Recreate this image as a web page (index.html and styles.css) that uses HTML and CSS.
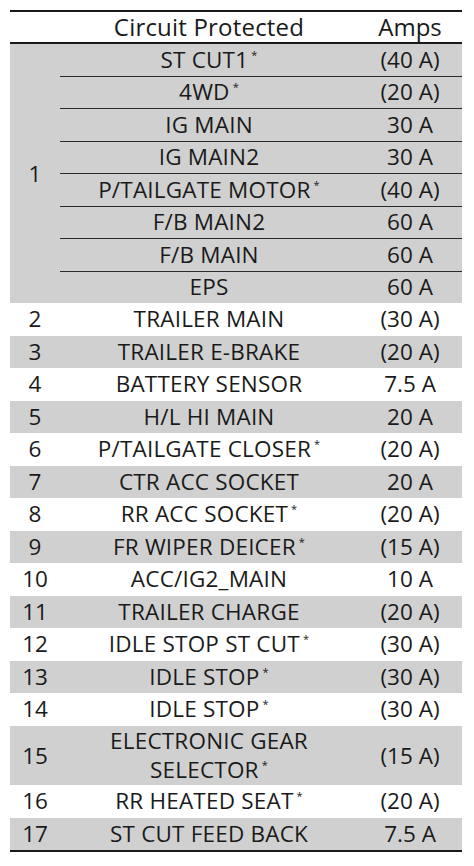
FILE: index.html
```html
<!DOCTYPE html>
<html>
<head>
<meta charset="utf-8">
<link rel="stylesheet" href="styles.css">
</head>
<body>
<table class="fuse">
  <thead>
    <tr><th class="no"></th><th class="circ">Circuit Protected</th><th class="amps">Amps</th></tr>
  </thead>
  <tbody>
    <tr class="g first"><td class="no" rowspan="8">1</td><td class="circ">ST CUT1<sup>*</sup></td><td class="amps">(40 A)</td></tr>
    <tr class="g sub"><td class="circ">4WD<sup>*</sup></td><td class="amps">(20 A)</td></tr>
    <tr class="g sub"><td class="circ">IG MAIN</td><td class="amps">30 A</td></tr>
    <tr class="g sub"><td class="circ">IG MAIN2</td><td class="amps">30 A</td></tr>
    <tr class="g sub"><td class="circ">P/TAILGATE MOTOR<sup>*</sup></td><td class="amps">(40 A)</td></tr>
    <tr class="g sub"><td class="circ">F/B MAIN2</td><td class="amps">60 A</td></tr>
    <tr class="g sub"><td class="circ">F/B MAIN</td><td class="amps">60 A</td></tr>
    <tr class="g sub"><td class="circ">EPS</td><td class="amps">60 A</td></tr>
    <tr><td class="no">2</td><td class="circ">TRAILER MAIN</td><td class="amps">(30 A)</td></tr>
    <tr class="g"><td class="no">3</td><td class="circ">TRAILER E-BRAKE</td><td class="amps">(20 A)</td></tr>
    <tr><td class="no">4</td><td class="circ">BATTERY SENSOR</td><td class="amps">7.5 A</td></tr>
    <tr class="g"><td class="no">5</td><td class="circ">H/L HI MAIN</td><td class="amps">20 A</td></tr>
    <tr><td class="no">6</td><td class="circ">P/TAILGATE CLOSER<sup>*</sup></td><td class="amps">(20 A)</td></tr>
    <tr class="g"><td class="no">7</td><td class="circ">CTR ACC SOCKET</td><td class="amps">20 A</td></tr>
    <tr><td class="no">8</td><td class="circ">RR ACC SOCKET<sup>*</sup></td><td class="amps">(20 A)</td></tr>
    <tr class="g"><td class="no">9</td><td class="circ">FR WIPER DEICER<sup>*</sup></td><td class="amps">(15 A)</td></tr>
    <tr><td class="no">10</td><td class="circ">ACC/IG2_MAIN</td><td class="amps">10 A</td></tr>
    <tr class="g"><td class="no">11</td><td class="circ">TRAILER CHARGE</td><td class="amps">(20 A)</td></tr>
    <tr><td class="no">12</td><td class="circ">IDLE STOP ST CUT<sup>*</sup></td><td class="amps">(30 A)</td></tr>
    <tr class="g"><td class="no">13</td><td class="circ">IDLE STOP<sup>*</sup></td><td class="amps">(30 A)</td></tr>
    <tr><td class="no">14</td><td class="circ">IDLE STOP<sup>*</sup></td><td class="amps">(30 A)</td></tr>
    <tr class="g tall"><td class="no">15</td><td class="circ">ELECTRONIC GEAR<br>SELECTOR<sup>*</sup></td><td class="amps">(15 A)</td></tr>
    <tr><td class="no">16</td><td class="circ">RR HEATED SEAT<sup>*</sup></td><td class="amps">(20 A)</td></tr>
    <tr class="g last"><td class="no">17</td><td class="circ">ST CUT FEED BACK</td><td class="amps">7.5 A</td></tr>
  </tbody>
</table>
</body>
</html>
```

FILE: styles.css
```css
html, body {
  margin: 0;
  padding: 0;
  background: #ffffff;
}
body {
  padding: 10px 12px 0 10px;
  font-family: "Open Sans", "Noto Sans", sans-serif;
  color: #1a1a1a;
}
.fuse {
  width: 452px;
  border-collapse: collapse;
  table-layout: fixed;
  font-size: 22.5px;
}
.fuse th, .fuse td {
  padding: 0;
  text-align: center;
  vertical-align: middle;
  font-weight: 400;
  height: 32.5px;
  line-height: 28px;
  white-space: nowrap;
}
.fuse thead th {
  border-top: 2px solid #1a1a1a;
  border-bottom: 2px solid #1a1a1a;
  height: 30px;
  font-size: 24px;
}
.fuse .no { width: 50px; }
.fuse .circ { width: 298px; letter-spacing: 0.2px; }
.fuse .amps { width: 104px; }
.fuse tr.g td { background: #d0d0d0; }
.fuse tr.first td { height: 31.5px; }
.fuse tr.sub td { height: 31.5px; }
.fuse tr.sub td.circ, .fuse tr.sub td.amps {
  border-top: 1.5px solid #2a2a2a;
}
.fuse tr.tall td { height: 59.5px; line-height: 29px; }
.fuse tr.last td { border-bottom: 2px solid #1a1a1a; }
.fuse sup {
  font-size: 11px;
  line-height: 0;
  vertical-align: 9px;
  margin-left: 3px;
}
```
